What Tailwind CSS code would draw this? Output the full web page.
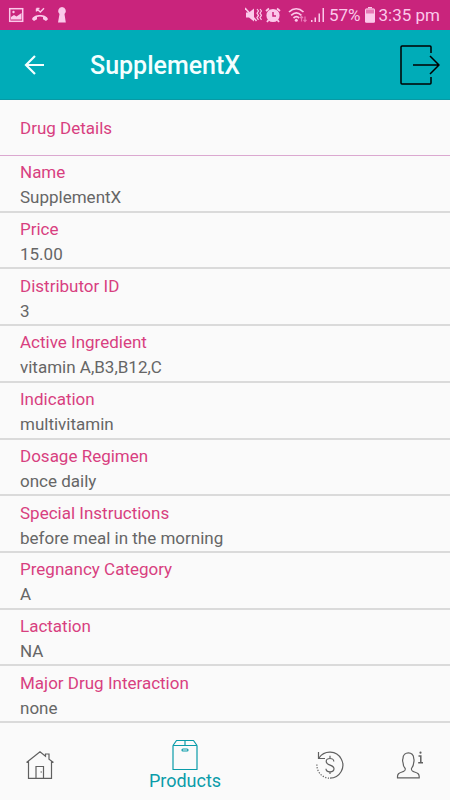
<!DOCTYPE html>
<html lang="en">
<head>
<meta charset="utf-8">
<meta name="viewport" content="width=device-width, initial-scale=1">
<title>SupplementX</title>
<script src="https://cdn.jsdelivr.net/npm/@tailwindcss/browser@4"></script>
</head>
<body class="flex min-h-screen flex-col bg-[#fafafa] font-[Roboto,sans-serif] text-[17px] leading-5 text-[#666666]">
  <!-- Status bar -->
  <div class="flex h-[30px] shrink-0 items-center justify-between bg-[#c9247c] pr-2.5 pl-2 text-[#fbc9ea]">
    <div class="flex items-center gap-2">
      <svg class="h-4 w-4" viewBox="0 0 16 16" fill="none" aria-hidden="true"><rect x="1.7" y="1.7" width="13" height="12.6" stroke="currentColor" stroke-width="1.5"/><path d="M3 12.500V10l3-2 2.500 1.500L13.500 6v6.500z" fill="currentColor"/><circle cx="5.500" cy="5" r="1.200" fill="currentColor"/></svg>
      <svg class="h-4 w-4" viewBox="0 0 16 16" fill="none" aria-hidden="true"><path d="M4.500 1.500v3M4.500 1.500h3M4.700 1.700l3.600 3.300L12 1.200" stroke="currentColor" stroke-width="1.400"/><path d="M0 12.200c1.500-5.600 14.500-5.600 16 0l-2 1.800-3-1.700V10c-2-.7-4-.7-6 0v2.300L2 14z" fill="currentColor"/></svg>
      <svg class="h-[18px] w-3" viewBox="0 0 12 18" fill="currentColor" aria-hidden="true"><path d="M6 1a4 4 0 0 1 2.500 7l1.300 8.500H2L3.500 8A4 4 0 0 1 6 1z"/></svg>
    </div>
    <div class="flex items-center gap-[3px]">
      <svg class="h-[18px] w-[17px]" viewBox="0 0 17 18" fill="none" stroke="currentColor" aria-hidden="true"><path d="M1 6.500h3l5-4v13l-5-4H1z" fill="currentColor" stroke="none"/><path d="M0 2l11.500 13" stroke-width="1.500"/><path d="M12 3l1.500 2L12 7.200l1.500 2.200-1.500 2.200 1.500 2.200M15 3l1.500 2L15 7.200l1.500 2.200-1.500 2.200 1.500 2.200" stroke-width="1.200"/></svg>
      <svg class="h-4 w-4" viewBox="0 0 16 16" fill="none" aria-hidden="true"><circle cx="8" cy="8.500" r="5.500" fill="#d5509a" stroke="currentColor" stroke-width="2.200"/><circle cx="8" cy="8.500" r="5" fill="currentColor"/><path d="M1 4l3-2.500M15 4l-3-2.500M3.500 13L2 15M12.500 13l1.500 2" stroke="currentColor" stroke-width="1.800"/><path d="M8 5v4h3" stroke="#c9247c" stroke-width="1.500"/></svg>
      <svg class="ml-1 h-4 w-[19px]" viewBox="0 0 19 16" fill="none" stroke="currentColor" stroke-width="1.700" aria-hidden="true"><path d="M1 5c4.500-4.200 10-4.200 14.500 0M3.200 8.300c3.300-3 6.900-3 10.200 0M5.500 11c1.900-1.700 3.800-1.700 5.700 0"/><circle cx="8.300" cy="13.200" r="1.500" fill="currentColor" stroke="none"/><path d="M13.500 14.500v-5M12 11l1.500-1.700L15 11M17 9.500v5M15.500 12.800l1.500 1.700 1.500-1.700" stroke="#ea78b8" stroke-width="1.200"/></svg>
      <svg class="h-4 w-4" viewBox="0 0 16 16" fill="currentColor" aria-hidden="true"><path d="M1 13h1.500v2H1zM4.500 10.500H6V15H4.500zM8.500 6.500H10V15H8.500zM12.500 1H14v14h-1.500z"/></svg>
      <span>57%</span>
      <svg class="h-4 w-3" viewBox="0 0 12 16" aria-hidden="true"><path d="M4 0h4v1.500H4z" fill="currentColor"/><rect x="1" y="1.500" width="10" height="14" rx="1" fill="#e677b5"/><path d="M1 6.500h10v8.200q0 .8-.8.800H1.800q-.8 0-.8-.8z" fill="currentColor"/><rect x="1.500" y="2" width="9" height="13" rx="1" fill="none" stroke="currentColor"/></svg>
      <span>3:35 pm</span>
    </div>
  </div>

  <!-- App bar -->
  <header class="flex h-[70px] shrink-0 items-center border-b border-[#0899a4] bg-[#00acb8] pr-2.5 pl-6 text-[#f4ffff]">
    <button type="button" aria-label="Back" class="h-5 w-5"><svg class="h-5 w-5" viewBox="0 0 20 20" fill="none" stroke="currentColor" stroke-width="2.200" aria-hidden="true"><path d="M20 10H2M11 1L2 10l9 9"/></svg></button>
    <h1 class="ml-[46px] flex-1 pt-0.5 text-[25px] leading-8 font-medium">SupplementX</h1>
    <button type="button" aria-label="Log out" class="h-10 w-10 text-black"><svg class="h-10 w-10" viewBox="0 0 40 40" fill="none" stroke="currentColor" stroke-width="1.500" stroke-linejoin="round" aria-hidden="true"><path d="M31 8V2q0-1-1-1H2Q1 1 1 2v36q0 1 1 1h28q1 0 1-1v-6M13 20h26M30 11l9 9-9 9"/></svg></button>
  </header>

  <main class="flex flex-1 flex-col">
    <h2 class="flex h-14 shrink-0 items-center border-b border-[#dba8d0] px-5 text-[#d83f80]">Drug Details</h2>
    <dl class="flex flex-1 flex-col">
      <div class="flex flex-1 flex-col justify-center gap-[5px] border-b-2 border-[#dadada] px-5 pt-[3px]"><dt class="text-[#d83f80]">Name</dt><dd>SupplementX</dd></div>
      <div class="flex flex-1 flex-col justify-center gap-[5px] border-b-2 border-[#dadada] px-5 pt-[3px]"><dt class="text-[#d83f80]">Price</dt><dd>15.00</dd></div>
      <div class="flex flex-1 flex-col justify-center gap-[5px] border-b-2 border-[#dadada] px-5 pt-[3px]"><dt class="text-[#d83f80]">Distributor ID</dt><dd>3</dd></div>
      <div class="flex flex-1 flex-col justify-center gap-[5px] border-b-2 border-[#dadada] px-5 pt-[3px]"><dt class="text-[#d83f80]">Active Ingredient</dt><dd>vitamin A,B3,B12,C</dd></div>
      <div class="flex flex-1 flex-col justify-center gap-[5px] border-b-2 border-[#dadada] px-5 pt-[3px]"><dt class="text-[#d83f80]">Indication</dt><dd>multivitamin</dd></div>
      <div class="flex flex-1 flex-col justify-center gap-[5px] border-b-2 border-[#dadada] px-5 pt-[3px]"><dt class="text-[#d83f80]">Dosage Regimen</dt><dd>once daily</dd></div>
      <div class="flex flex-1 flex-col justify-center gap-[5px] border-b-2 border-[#dadada] px-5 pt-[3px]"><dt class="text-[#d83f80]">Special Instructions</dt><dd>before meal in the morning</dd></div>
      <div class="flex flex-1 flex-col justify-center gap-[5px] border-b-2 border-[#dadada] px-5 pt-[3px]"><dt class="text-[#d83f80]">Pregnancy Category</dt><dd>A</dd></div>
      <div class="flex flex-1 flex-col justify-center gap-[5px] border-b-2 border-[#dadada] px-5 pt-[3px]"><dt class="text-[#d83f80]">Lactation</dt><dd>NA</dd></div>
      <div class="flex flex-1 flex-col justify-center gap-[5px] border-b-2 border-[#dadada] px-5 pt-[3px]"><dt class="text-[#d83f80]">Major Drug Interaction</dt><dd>none</dd></div>
    </dl>
  </main>

  <!-- Bottom navigation -->
  <nav class="flex h-[77px] shrink-0 text-[#606060]">
    <a href="#home" aria-label="Home" class="flex w-20 items-center justify-center pt-1.5">
      <svg class="h-7 w-7" viewBox="0 0 28 28" fill="none" stroke="currentColor" stroke-width="1.200" aria-hidden="true"><path d="M.5 11.500L14 .8l5.500 4.400V3H23v5.300l4.500 3.200M2.500 10.500V27.400h23V10.500M10 27V15.500h7.500V27M14.500 21h1.500"/></svg>
    </a>
    <a href="#products" aria-current="page" class="flex flex-1 flex-col items-center pt-4 text-[#0a9ca9]">
      <svg class="h-8 w-[26px]" viewBox="0 0 26 32" fill="none" stroke="currentColor" stroke-width="1.200" stroke-linejoin="round" aria-hidden="true"><path d="M1 6.500h24V30.500H1zM1 6.500L4.500 1.500h17L25 6.500M13 1.500v5"/><rect x="10" y="10" width="6" height="2" rx="1"/></svg>
      <span class="text-lg leading-5">Products</span>
    </a>
    <a href="#orders" aria-label="Order history" class="flex w-20 items-center justify-center pt-1.5">
      <svg class="h-7 w-7" viewBox="0 0 28 28" fill="none" stroke="currentColor" stroke-width="1.200" aria-hidden="true"><path d="M3 7A13 13 0 1 1 14 27.200M2.500 1v6.500H9"/><path d="M13 27.200A13 13 0 0 1 1 12.500" stroke-dasharray="1.200 1.500"/><path d="M17.800 10.500c0-4-7.600-4-7.600 0 0 4.500 7.800 2.800 7.800 7.300 0 4-8 4-8 0M14 4.800v2.700M14 20.800V23"/></svg>
    </a>
    <a href="#account" aria-label="Account information" class="flex w-20 items-center justify-center pt-1.5">
      <svg class="h-7 w-7" viewBox="0 0 28 28" fill="none" stroke="currentColor" stroke-width="1.200" aria-hidden="true"><path d="M1.500 26.800c-.3-4 1.500-4.800 4.500-5.800 3.200-1 3.500-1.700 3.200-3.500C7 15 7 13 7 11.500c-.8-2-.5-2.800 0-4C7 0 18 0 17.700 7.500c.5 1.200.6 2 0 4 0 1.500-.2 3.500-2.200 6-.3 1.800 0 2.500 3 3.500 3.200 1 5 1.800 4.700 5.800z"/><path d="M22.500 5h2.300v6.500M22.200 11.700h4.800" stroke-width="1.500"/><circle cx="24.500" cy="1.700" r="1.100" fill="currentColor" stroke="none"/></svg>
    </a>
  </nav>
</body>
</html>
